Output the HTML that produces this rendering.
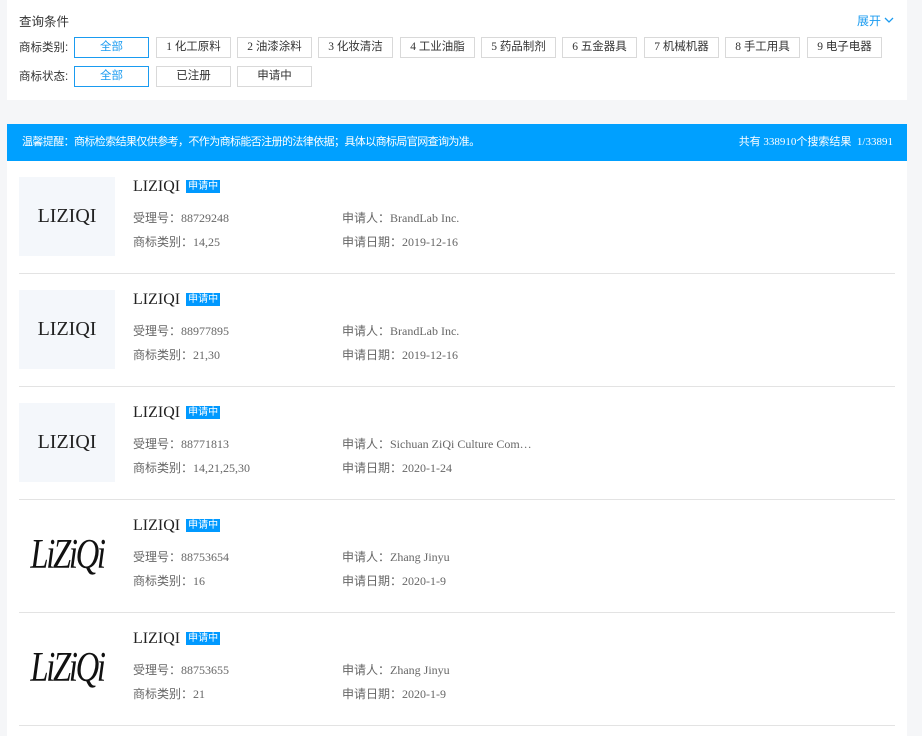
<!DOCTYPE html>
<html><head><meta charset="utf-8"><style>
*{margin:0;padding:0;box-sizing:border-box}
body{width:922px;height:736px;background:#f5f6f8;font-family:"Liberation Sans","Noto Sans CJK SC",sans-serif;position:relative;overflow:hidden}
.panel{position:absolute;left:7px;top:0;width:900px;height:100px;background:#fff}
.t{position:absolute;left:19px;top:11px;font-size:12.5px;color:#333}
.more{position:absolute;left:857px;top:12px;font-size:12px;color:#1a9bf0}
.lbl{position:absolute;left:19px;font-size:11.5px;color:#333}
.b{position:absolute;width:75px;height:21px;border:1px solid #d9d9d9;background:#fff;font-size:11.5px;color:#333;text-align:center;line-height:19px;font-family:"Liberation Serif","Noto Sans CJK SC",serif}
.b.on{border-color:#1a9bf0;color:#1a9bf0}
.bar{position:absolute;left:7px;top:124px;width:900px;height:37px;background:#00a0ff;color:#fff;font-size:11px;line-height:37px}
.list{position:absolute;left:7px;top:161px;width:900px;height:575px;background:#fff}
.item{position:absolute;left:12px;width:876px;height:113px;border-bottom:1px solid #e3e3e3}
.img{position:absolute;left:0;top:16px;width:96px;height:79px;background:#f4f7fb;font-family:"Liberation Serif",serif;font-size:20px;color:#222;text-align:center;line-height:79px}
.img.w{background:#fff;font-style:italic;font-size:42px;letter-spacing:-3px;transform:scaleX(0.78);color:#111}
.ti{position:absolute;left:114px;top:17px;font-family:"Liberation Serif",serif;font-size:16px;color:#222}
.bd{display:inline-block;background:#0099ff;color:#fff;font-family:"Liberation Sans","Noto Sans CJK SC",sans-serif;font-size:10px;line-height:13px;padding:0 2px;vertical-align:2px;margin-left:6px}
.d{position:absolute;font-family:"Liberation Serif","Noto Sans CJK SC",serif;font-size:12px;color:#666;white-space:nowrap}
</style></head><body>
<div class="panel"></div>
<div class="t">查询条件</div>
<div class="more">展开 <svg width="10" height="7" viewBox="0 0 10 7" style="vertical-align:1px"><path d="M1 1l4 4 4-4" stroke="#1a9bf0" fill="none" stroke-width="1.3"/></svg></div>
<div class="lbl" style="top:39px">商标类别:</div>
<div class="lbl" style="top:68px">商标状态:</div>
<div class="b on" style="left:74px;top:37px">全部</div>
<div class="b" style="left:156px;top:37px">1 化工原料</div>
<div class="b" style="left:237px;top:37px">2 油漆涂料</div>
<div class="b" style="left:318px;top:37px">3 化妆清洁</div>
<div class="b" style="left:400px;top:37px">4 工业油脂</div>
<div class="b" style="left:481px;top:37px">5 药品制剂</div>
<div class="b" style="left:562px;top:37px">6 五金器具</div>
<div class="b" style="left:644px;top:37px">7 机械机器</div>
<div class="b" style="left:725px;top:37px">8 手工用具</div>
<div class="b" style="left:807px;top:37px">9 电子电器</div>
<div class="b on" style="left:74px;top:66px">全部</div>
<div class="b" style="left:156px;top:66px">已注册</div>
<div class="b" style="left:237px;top:66px">申请中</div>
<div class="bar"><span style="position:absolute;left:15px;letter-spacing:-0.6px">温馨提醒：商标检索结果仅供参考，不作为商标能否注册的法律依据；具体以商标局官网查询为准。</span><span style="position:absolute;right:14px;font-family:'Liberation Serif','Noto Sans CJK SC',serif">共有 338910个搜索结果&nbsp; 1/33891</span></div>
<div class="list">
<div class="item" style="top:0">
<div class="img">LIZIQI</div><div class="ti">LIZIQI<span class="bd">申请中</span></div>
<div class="d" style="left:114px;top:48px">受理号：88729248</div><div class="d" style="left:323px;top:48px">申请人：BrandLab Inc.</div>
<div class="d" style="left:114px;top:72px">商标类别：14,25</div><div class="d" style="left:323px;top:72px">申请日期：2019-12-16</div></div>
<div class="item" style="top:113px">
<div class="img">LIZIQI</div><div class="ti">LIZIQI<span class="bd">申请中</span></div>
<div class="d" style="left:114px;top:48px">受理号：88977895</div><div class="d" style="left:323px;top:48px">申请人：BrandLab Inc.</div>
<div class="d" style="left:114px;top:72px">商标类别：21,30</div><div class="d" style="left:323px;top:72px">申请日期：2019-12-16</div></div>
<div class="item" style="top:226px">
<div class="img">LIZIQI</div><div class="ti">LIZIQI<span class="bd">申请中</span></div>
<div class="d" style="left:114px;top:48px">受理号：88771813</div><div class="d" style="left:323px;top:48px">申请人：Sichuan ZiQi Culture Com…</div>
<div class="d" style="left:114px;top:72px">商标类别：14,21,25,30</div><div class="d" style="left:323px;top:72px">申请日期：2020-1-24</div></div>
<div class="item" style="top:339px">
<div class="img w">LiZiQi</div><div class="ti">LIZIQI<span class="bd">申请中</span></div>
<div class="d" style="left:114px;top:48px">受理号：88753654</div><div class="d" style="left:323px;top:48px">申请人：Zhang Jinyu</div>
<div class="d" style="left:114px;top:72px">商标类别：16</div><div class="d" style="left:323px;top:72px">申请日期：2020-1-9</div></div>
<div class="item" style="top:452px">
<div class="img w">LiZiQi</div><div class="ti">LIZIQI<span class="bd">申请中</span></div>
<div class="d" style="left:114px;top:48px">受理号：88753655</div><div class="d" style="left:323px;top:48px">申请人：Zhang Jinyu</div>
<div class="d" style="left:114px;top:72px">商标类别：21</div><div class="d" style="left:323px;top:72px">申请日期：2020-1-9</div></div>
</div>
</body></html>
